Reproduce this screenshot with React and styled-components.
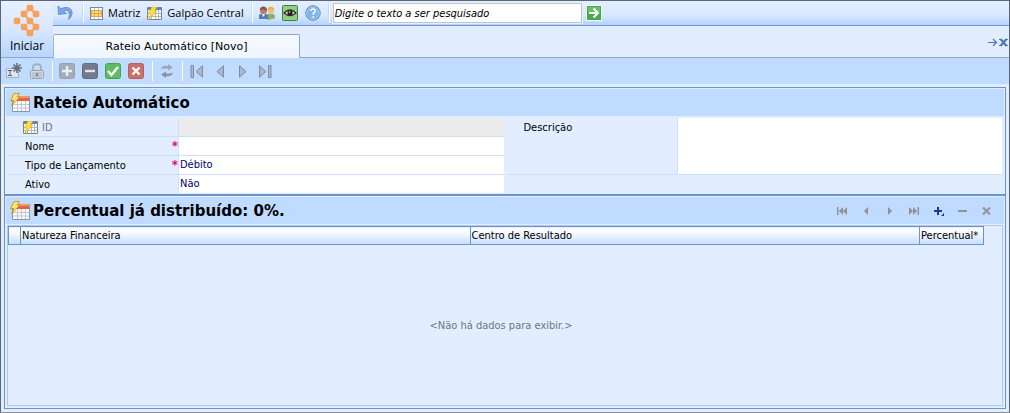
import React from "react";
import styled, { createGlobalStyle, css } from "styled-components";

const ui = `"DejaVu Sans Condensed", "DejaVu Sans", sans-serif`;
const segoe = `"Open Sans", "Noto Sans", sans-serif`;
const verdana = `"DejaVu Sans", sans-serif`;

const Global = createGlobalStyle`
  *, *::before, *::after { box-sizing: border-box; }
  body { margin: 0; background: #e2eeff; font-family: ${ui}; font-size: 11px; color: #000; }
  svg { display: block; flex: none; }
  button { font: inherit; color: inherit; border: 0; padding: 0; background: none; }
`;

const Window = styled.div`
  display: flex;
  flex-direction: column;
  min-height: 100vh;
  border: 1px solid #5c6675;
  border-bottom-color: #8c9298;
  background: #e2eeff;
`;

const Top = styled.header`
  display: flex;
  height: 57px;
`;

const StartButton = styled.button`
  display: flex;
  flex-direction: column;
  align-items: center;
  flex: none;
  width: 52px;
  padding-top: 3px;
  background: linear-gradient(#e6f0ff, #dbe9ff 45%, #b8d5fc);
  border-bottom: 1px solid #8fa9cc;
  font: 12px/18px ${segoe};
`;

const TopRight = styled.div`
  display: flex;
  flex-direction: column;
  flex: 1;
  min-width: 0;
`;

const MainBar = styled.nav`
  display: flex;
  align-items: center;
  height: 25px;
  padding-left: 4px;
  background: linear-gradient(#e3eeff, #d9e8ff 60%, #b5d3fb);
  border-bottom: 1px solid #6c9ad6;
  font: 11px/16px ${segoe};
`;

const MainItem = styled.button`
  display: flex;
  align-items: center;
  gap: 5px;
  margin-right: 7px;
  white-space: nowrap;
`;

const Separator = styled.span`
  flex: none;
  width: 2px;
  height: 20px;
  margin-left: ${(p) => p.$before || 0}px;
  margin-right: ${(p) => p.$after || 6}px;
  background: #fff;
  border-left: 1px solid #c4daf8;
`;

const Search = styled.input`
  width: 249px;
  height: 20px;
  padding: 0 1px;
  border: 1px solid #b3c6e4;
  outline: 1px solid #f0ece8;
  outline-offset: 0;
  font: italic 11px/14px ${ui};
  color: #000;
  &::placeholder { color: #000; opacity: 1; }
`;

const GoButton = styled.button`
  margin-left: 4px;
`;

const TabStrip = styled.div`
  display: flex;
  align-items: flex-end;
  flex: 1;
`;

const Tab = styled.button`
  width: 247px;
  height: 24px;
  border: 1px solid #8ea5c6;
  border-bottom: 0;
  border-left-color: #a3b8d8;
  border-radius: 2px 2px 0 0;
  background: linear-gradient(#f6faff, #eff5ff);
  font: 11px/20px ${verdana};
`;

const TabRest = styled.div`
  display: flex;
  justify-content: flex-end;
  align-items: flex-start;
  align-self: flex-end;
  flex: 1;
  height: 22px;
  padding-top: 2px;
  border-bottom: 1px solid #8fa4c6;
`;

const Toolbar = styled.div`
  display: flex;
  align-items: center;
  height: 26px;
  padding-left: 4px;
  background: #bfdbff;
`;

const Tool = styled.button`
  display: grid;
  place-items: center;
  width: ${(p) => p.$w || 23}px;
  height: 22px;
`;

const Content = styled.main`
  display: flex;
  flex-direction: column;
  flex: 1;
  margin: 3px;
  border: 1px solid #6695d6;
  background: #e2eeff;
`;

const PanelHead = styled.div`
  display: flex;
  align-items: center;
  gap: 3px;
  height: 27px;
  margin: 1px 1px 0;
  padding: 0 6px 0 4px;
  background: #bfdbff;
`;

const Title = styled.h2`
  margin: 0;
  flex: 1;
  font: bold 15px/20px ${verdana};
`;

const Form = styled.form`
  display: grid;
  grid-template-columns: 1fr 1fr;
  column-gap: 3px;
  padding: 2px 3px 0;
  border-bottom: 2px solid #6695d0;
`;

const Row = styled.div`
  display: flex;
  height: ${(p) => (p.$tall ? 57 : 19)}px;
  border-bottom: 1px solid ${(p) => (p.$line ? "#cde0fb" : "transparent")};
`;

const Label = styled.label`
  display: flex;
  align-items: center;
  flex: none;
  gap: 4px;
  width: 171px;
  height: 18px;
  padding-left: ${(p) => (p.$icon ? 15 : 17)}px;
  border-right: 1px solid #cde0fb;
  color: ${(p) => (p.$muted ? "#6f7580" : "#000")};
  ${(p) => p.$plain && css`height: 100%; align-items: flex-start; padding-top: 3px;`}
`;

const Star = styled.span`
  margin-left: auto;
  color: #e0115f;
  font: bold 12px/18px ${verdana};
`;

const field = css`
  flex: 1;
  min-width: 0;
  padding: 0 1px;
  border: 0;
  border-radius: 0;
  outline: 0;
  background: ${(p) => (p.disabled ? "#ececec" : "#fff")};
  color: #00006e;
  font: 11px/14px ${ui};
`;
const Input = styled.input`${field}`;
const Select = styled.select`${field} appearance: none;`;
const TextArea = styled.textarea`${field} resize: none;`;

const Navigator = styled.div`
  display: flex;
`;
const NavButton = styled.button`
  display: grid;
  place-items: center;
  width: 24px;
  height: 20px;
`;

const GridBox = styled.div`
  display: flex;
  flex-direction: column;
  flex: 1;
  margin: 1px 2px 2px;
  border: 1px solid #b4c8e6;
`;

const HeadTable = styled.table`
  width: calc(100% - 18px);
  table-layout: fixed;
  border-collapse: collapse;
`;

const HeadCell = styled.th`
  width: ${(p) => (p.$w ? p.$w + "px" : "auto")};
  height: 18px;
  padding: 1px 0 0 1px;
  border: 1px solid #6695d0;
  background: linear-gradient(#fff, #f4f8ff 35%, #c6defd);
  font: 11px/16px ${ui};
  text-align: left;
  white-space: nowrap;
`;

const Empty = styled.p`
  display: grid;
  place-items: center;
  flex: 1;
  margin: 0;
  padding-right: 8px;
  color: #70757d;
`;

const cells = [[17, 4], [11, 10], [23, 10], [4, 17], [17, 17], [11, 23], [23, 23], [17, 29]];

const Logo = () => (
  <svg width="28" height="33" viewBox="0 0 28 33" fill="#f9a05c">
    {cells.map(([x, y]) => (
      <rect key={x + "-" + y} x={x - 3.3} y={y - 3.3} width="6.600" height="6.600" rx="1.800" />
    ))}
    <path d="M17 4L11 10L17 17L23 23L17 29L11 23M17 4L23 10" fill="none" stroke="#f9a05c" strokeWidth="2" />
  </svg>
);

const Undo = () => (
  <svg width="18" height="18" viewBox="0 0 18 18">
    <path d="M1 2L1.500 10.500L9.500 9.500L6.800 7.300C10 5 14 7 11.500 15.500C19 9 14 0 4 4.800Z" fill="#7ba5e8" stroke="#5584cf" strokeWidth=".8" />
  </svg>
);

const Sheet = () => (
  <svg width="13" height="13" viewBox="0 0 13 13" shapeRendering="crispEdges">
    <path d="M0 0h13v13H0z" fill="#5b91cc" />
    <path d="M1 1h11v11H1z" fill="#fff" />
    <path d="M4 1h1v11H4zM8 1h1v11H8z" fill="#b9cce4" />
    <path d="M1 3h11v7H1z" fill="#f2a324" />
    <path d="M2 4h2v2H2zM5 4h3v2H5zM9 4h2v2H9zM2 7h2v2H2zM5 7h3v2H5zM9 7h2v2H9z" fill="#ffe08c" />
  </svg>
);

const BoltTable = ({ red }) => (
  <svg width={red ? 20 : 15} height={red ? 19 : 13} viewBox={red ? "0 0 20 19" : "0 0 15 13"}>
    {red ? (
      <>
        <path d="M2.500 3.500h17v15h-17z" fill="#f9fafc" stroke="#8b94a7" />
        <path d="M3 3h16v5H3z" fill="#e96338" />
        <path d="M3 3h16v2H3z" fill="#f49372" />
        <path d="M3 11.500h16M3 15h16M7.500 8v10M11.500 8v10M15.500 8v10" stroke="#c3c8d6" />
        <path d="M4 .5L9.500 .5L7 4L10 4L1.500 13L4 7.500L.5 7.500Z" fill="#ffe174" stroke="#c08a1c" strokeWidth=".8" />
      </>
    ) : (
      <>
        <path d="M.5.5h14v12H.5z" fill="#fff" stroke="#7b838e" />
        <path d="M1 1h13v2H1z" fill="#4a8dcc" />
        <path d="M1 6.500h13M1 9.500h13M4.500 3v9M8.500 3v9M11.500 3v9" stroke="#b0b7c0" />
        <path d="M5 0L10 0L7.500 4L10 4L1.500 12.500L4 7L1 7Z" fill="#ffdf3f" stroke="#dba61c" strokeWidth=".6" />
      </>
    )}
  </svg>
);

const People = () => (
  <svg width="16" height="14" viewBox="0 0 16 14">
    <path d="M8 14V9c2-2 7-2 8 1v2l-2 1z" fill="#83b56c" />
    <circle cx="12" cy="4.500" r="3.200" fill="#f2bd83" />
    <path d="M8.700 4C8.500-.2 15.500-.2 15.300 4C13 2.500 11 3 8.700 4" fill="#eab13d" />
    <path d="M0 13V9c1-2 7-2 9 0v4z" fill="#527fc0" />
    <path d="M3 8l1.500 3L6 8z" fill="#fff" />
    <circle cx="4.500" cy="4.500" r="3.500" fill="#c77a55" />
    <path d="M1 4.500C0-.8 8.700-1 8 5C6 4 5 2.500 1 4.500" fill="#7b5a58" />
  </svg>
);

const Eye = () => (
  <svg width="16" height="16" viewBox="0 0 16 16">
    <rect x=".5" y=".5" width="15" height="15" rx="1" fill="#8fce83" stroke="#4b7a49" />
    <path d="M2 8Q8 2 14 8Q8 13 2 8Z" fill="#e8f2e2" stroke="#333" strokeWidth="1.300" />
    <circle cx="8" cy="7.800" r="2.600" fill="#222" />
    <circle cx="7.500" cy="7" r=".7" fill="#fff" />
  </svg>
);

const Help = () => (
  <svg width="16" height="16" viewBox="0 0 16 16">
    <circle cx="8" cy="8" r="7.200" fill="#82b3e6" stroke="#4683c8" />
    <circle cx="8" cy="8" r="6.200" fill="none" stroke="#b8d8f6" strokeWidth=".8" />
    <path d="M5.800 6Q6 4 8.200 4T10.300 6Q10.300 7 8.300 8.300V9.800" fill="none" stroke="#fff" strokeWidth="1.500" />
    <path d="M7.500 11h1.600v1.600H7.500z" fill="#fff" />
  </svg>
);

const Go = () => (
  <svg width="16" height="16" viewBox="0 0 16 16">
    <path d="M0 0h16v16H0z" fill="#f5fbf3" />
    <path d="M1 1h14v14H1z" fill="#46aa4d" />
    <path d="M2 2h12v5H2z" fill="#6abf6b" />
    <path d="M3 8h8M7.500 3.500L12 8L7.500 12.500" fill="none" stroke="#fff" strokeWidth="2" />
  </svg>
);

const DockIcons = () => (
  <svg width="21" height="9" viewBox="0 0 21 9" fill="none" stroke="#4877b2">
    <path d="M0 4.500h8M5 1l3.500 3.500L5 8" strokeWidth="1.200" />
    <path d="M12.500 1l6 7M18.500 1l-6 7" strokeWidth="2" />
    <path d="M11 1.500h3M17 1.500h3M11 7.500h3M17 7.500h3" />
  </svg>
);

const NewIcon = () => (
  <svg width="16" height="16" viewBox="0 0 16 16" fill="none">
    <path d="M.5 5.500h12v9H.5z" fill="#e0e5ec" stroke="#a4afbd" />
    <path d="M2 7.500h4M2 12.500h4M4 7v6" stroke="#59616c" />
    <path d="M11 0v10M6 5h10M7.500 1.500l7 7M14.500 1.500l-7 7" stroke="#626d7c" strokeWidth="1.600" />
  </svg>
);

const Lock = () => (
  <svg width="14" height="16" viewBox="0 0 14 16" fill="none">
    <path d="M3 8V4.500C3 0 11 0 11 4.500V8" stroke="#a3adba" strokeWidth="1.800" />
    <rect x=".5" y="7.500" width="13" height="8" rx="1" fill="#d3d9e1" stroke="#9aa5b2" />
    <path d="M2 10h10M2 12h10M2 14h10" stroke="#a5afbc" />
    <path d="M6 10h2v3H6z" fill="#7b8795" />
  </svg>
);

const Badge = ({ color, edge, d, ink = "#fff" }) => (
  <svg width="16" height="16" viewBox="0 0 16 16">
    <rect x=".5" y=".5" width="15" height="15" rx="2" fill={color} stroke={edge} />
    <path d={d} fill="none" stroke={ink} strokeWidth="2.400" />
  </svg>
);

const Refresh = () => (
  <svg width="14" height="14" viewBox="0 0 14 14">
    <path d="M1 5.500Q2 1 8 2V0L13 3.500L8 6.500V4.500Q4 4 1 5.500Z" fill="#9ba7b6" />
    <path d="M13 8.500Q12 13 6 12V14L1 10.500L6 7.500V9.500Q10 10 13 8.500Z" fill="#8793a3" />
  </svg>
);

const Play = ({ back, bar }) => (
  <svg width={bar ? 13 : 8} height="13" viewBox={bar ? "0 0 13 13" : "0 0 8 13"}>
    <g transform={back ? `matrix(-1 0 0 1 ${bar ? 13 : 8} 0)` : undefined} fill="#a9b8ca" stroke="#7d8da1">
      <path d="M.5.800V12.200L7 6.500Z" />
      {bar && <path d="M9.500.5h2.500v12h-2.500z" />}
    </g>
  </svg>
);

const MiniNav = ({ back, double }) => (
  <svg width={double ? 10 : 4} height="8" viewBox={double ? "0 0 10 8" : "0 0 4 8"}>
    <g transform={back ? `matrix(-1 0 0 1 ${double ? 10 : 4} 0)` : undefined} fill="#8f9296">
      <path d="M0 0L4 4L0 8Z" />
      {double && <path d="M4 0L8 4L4 8ZM8.500 0h1.500v8H8.500z" />}
    </g>
  </svg>
);

const Glyph = ({ d, color, corner }) => (
  <svg width="11" height="10" viewBox="0 0 11 10">
    <path d={d} stroke={color} strokeWidth="2" fill="none" />
    {corner && <path d="M11 7v3H8z" fill={color} />}
  </svg>
);

export default function App() {
  return (
    <>
      <Global />
      <Window>
        <Top>
          <StartButton><Logo />Iniciar</StartButton>
          <TopRight>
            <MainBar>
              <MainItem aria-label="Desfazer"><Undo /></MainItem>
              <Separator />
              <MainItem><Sheet />Matriz</MainItem>
              <MainItem><BoltTable />Galpão Central</MainItem>
              <Separator />
              <MainItem aria-label="Usuários"><People /></MainItem>
              <MainItem aria-label="Visualizar"><Eye /></MainItem>
              <MainItem aria-label="Ajuda"><Help /></MainItem>
              <Separator $after={3} />
              <Search aria-label="Pesquisar" placeholder="Digite o texto a ser pesquisado" />
              <GoButton aria-label="Ir"><Go /></GoButton>
            </MainBar>
            <TabStrip>
              <Tab>Rateio Automático [Novo]</Tab>
              <TabRest><button aria-label="Fechar"><DockIcons /></button></TabRest>
            </TabStrip>
          </TopRight>
        </Top>
        <Toolbar>
          <Tool aria-label="Novo" $w={18}><NewIcon /></Tool>
          <Tool aria-label="Bloquear" $w={28}><Lock /></Tool>
          <Separator />
          <Tool aria-label="Adicionar" $w={16}><Badge color="#a3adba" edge="#95a1b0" ink="#e9eff7" d="M8 3v10M3 8h10" /></Tool>
          <Tool aria-label="Remover" $w={30}><Badge color="#717b89" edge="#626d7c" ink="#dde4ee" d="M3 8h10" /></Tool>
          <Tool aria-label="Confirmar" $w={16}><Badge color="#5fbd64" edge="#4a9f50" d="M3 8l3.500 4L13 4" /></Tool>
          <Tool aria-label="Cancelar" $w={30}><Badge color="#cb706c" edge="#b75f5b" d="M4.500 4.500l7 7M11.500 4.500l-7 7" /></Tool>
          <Separator />
          <Tool aria-label="Atualizar" $w={16}><Refresh /></Tool>
          <Separator $before={6} $after={2} />
          <Tool aria-label="Primeiro"><Play back bar /></Tool>
          <Tool aria-label="Anterior"><Play back /></Tool>
          <Tool aria-label="Próximo"><Play /></Tool>
          <Tool aria-label="Último"><Play bar /></Tool>
        </Toolbar>
        <Content>
          <PanelHead><BoltTable red /><Title>Rateio Automático</Title></PanelHead>
          <Form>
            <div>
              <Row $line>
                <Label htmlFor="id" $muted $icon><BoltTable />ID</Label>
                <Input id="id" disabled />
              </Row>
              <Row $line>
                <Label htmlFor="nome">Nome<Star>*</Star></Label>
                <Input id="nome" />
              </Row>
              <Row $line>
                <Label htmlFor="tipo">Tipo de Lançamento<Star>*</Star></Label>
                <Select id="tipo"><option>Débito</option></Select>
              </Row>
              <Row>
                <Label htmlFor="ativo">Ativo</Label>
                <Select id="ativo"><option>Não</option></Select>
              </Row>
            </div>
            <div>
              <Row $tall $line>
                <Label htmlFor="descricao" $plain>Descrição</Label>
                <TextArea id="descricao" />
              </Row>
            </div>
          </Form>
          <PanelHead>
            <BoltTable red />
            <Title>Percentual já distribuído: 0%.</Title>
            <Navigator>
              <NavButton aria-label="Primeiro registro"><MiniNav back double /></NavButton>
              <NavButton aria-label="Registro anterior"><MiniNav back /></NavButton>
              <NavButton aria-label="Próximo registro"><MiniNav /></NavButton>
              <NavButton aria-label="Último registro"><MiniNav double /></NavButton>
              <NavButton aria-label="Inserir"><Glyph color="#123e8c" corner d="M1 5h8M5 1v8" /></NavButton>
              <NavButton aria-label="Excluir"><Glyph color="#8f9296" d="M1 5h9" /></NavButton>
              <NavButton aria-label="Cancelar edição"><Glyph color="#8f9296" d="M2 1.500l7 7M9 1.500l-7 7" /></NavButton>
            </Navigator>
          </PanelHead>
          <GridBox>
            <HeadTable>
              <thead>
                <tr>
                  <HeadCell $w={12} aria-label="Indicador" />
                  <HeadCell>Natureza Financeira</HeadCell>
                  <HeadCell>Centro de Resultado</HeadCell>
                  <HeadCell $w={64}>Percentual*</HeadCell>
                </tr>
              </thead>
            </HeadTable>
            <Empty>&lt;Não há dados para exibir.&gt;</Empty>
          </GridBox>
        </Content>
      </Window>
    </>
  );
}
